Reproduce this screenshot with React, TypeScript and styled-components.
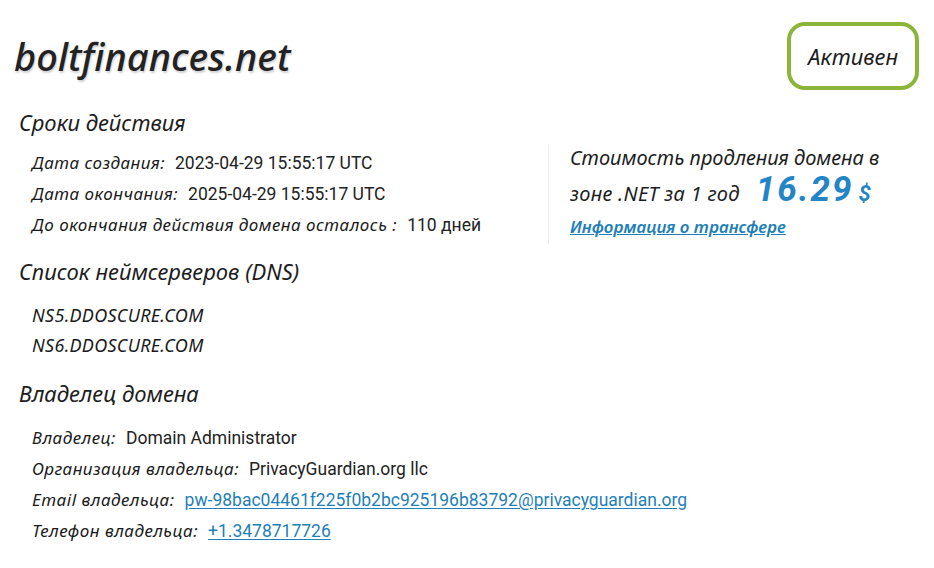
import React from "react";
import styled, { createGlobalStyle } from "styled-components";

const Global = createGlobalStyle`
  html, body { margin: 0; padding: 0; background: #ffffff; }
  body { font-family: "Noto Sans", "Open Sans", sans-serif; color: #1d1d1d; }
`;

const Page = styled.div`
  width: 934px;
  height: 568px;
  box-sizing: border-box;
  padding: 22px 15px 0 14px;
  overflow: hidden;
`;

const Header = styled.header`
  display: flex;
  justify-content: space-between;
  align-items: center;
`;

const Title = styled.h1`
  margin: 0;
  font-family: "Noto Sans", sans-serif;
  font-style: italic;
  font-weight: 500;
  font-size: 38px;
  line-height: 44px;
  color: #232323;
  text-shadow: 1px 2px 2px rgba(0, 0, 0, 0.18);
`;

const Badge = styled.div`
  width: 124px;
  height: 60px;
  box-sizing: content-box;
  border: 4px solid #8ab53a;
  border-radius: 18px;
  display: flex;
  align-items: center;
  justify-content: center;
  font-style: italic;
  font-size: 22px;
  color: #1d1d1d;
`;

const SectionTitle = styled.h2<{ $top: number }>`
  margin: ${(p) => p.$top}px 0 0 5px;
  font-style: italic;
  font-weight: 400;
  font-size: 22px;
  line-height: 30px;
  color: #1d1d1d;
`;

const Split = styled.div`
  display: flex;
  align-items: flex-start;
`;

const Rows = styled.div<{ $top: number; $width?: number }>`
  width: ${(p) => (p.$width ? `${p.$width}px` : "auto")};
  padding: ${(p) => p.$top}px 0 0 18px;
  box-sizing: border-box;
`;

const Row = styled.div`
  display: flex;
  align-items: baseline;
  height: 31px;
  line-height: 31px;
  white-space: nowrap;
`;

const Label = styled.span`
  font-style: italic;
  font-weight: 400;
  font-size: 17px;
  letter-spacing: 0.5px;
  margin-right: 10px;
  color: #1a1a1a;
`;

const Value = styled.span`
  font-family: "Roboto", sans-serif;
  font-size: 17.5px;
  color: #222;
`;

const LinkValue = styled.a`
  font-family: "Roboto", sans-serif;
  font-size: 17.5px;
  color: #1f7fb8;
  text-decoration: underline;
  text-underline-offset: 2px;
`;

const NameServer = styled.div`
  font-style: italic;
  font-weight: 400;
  font-size: 18px;
  line-height: 30px;
  letter-spacing: 0.3px;
  color: #1a1a1a;
`;

const PricePanel = styled.aside`
  margin-top: 8px;
  border-left: 1px solid #ececec;
  padding: 0 0 3px 21px;
  display: flex;
  flex-direction: column;
`;

const PriceText = styled.div`
  font-style: italic;
  font-size: 20px;
  line-height: 26px;
  color: #1d1d1d;
`;

const PriceLine = styled.div`
  display: flex;
  align-items: baseline;
  gap: 16px;
  font-style: italic;
  font-size: 20px;
  letter-spacing: 0.3px;
  color: #1d1d1d;
  line-height: 38px;
`;

const Amount = styled.span`
  font-family: "Roboto", sans-serif;
  font-weight: 700;
  font-style: italic;
  font-size: 35px;
  letter-spacing: 2px;
  color: #2385c6;
`;

const Currency = styled.span`
  font-family: "Roboto", sans-serif;
  font-weight: 700;
  font-style: italic;
  font-size: 22px;
  color: #2385c6;
  margin-left: 5px;
`;

const TransferLink = styled.a`
  font-style: italic;
  font-weight: 600;
  font-size: 17px;
  color: #1f7fb8;
  text-decoration: underline;
  line-height: 28px;
`;

export default function App() {
  return (
    <Page>
      <Global />
      <Header>
        <Title>boltfinances.net</Title>
        <Badge>Активен</Badge>
      </Header>

      <SectionTitle $top={17}>Сроки действия</SectionTitle>
      <Split>
        <Rows $top={10} $width={534}>
          <Row>
            <Label>Дата создания:</Label>
            <Value>2023-04-29 15:55:17 UTC</Value>
          </Row>
          <Row>
            <Label>Дата окончания:</Label>
            <Value>2025-04-29 15:55:17 UTC</Value>
          </Row>
          <Row>
            <Label>До окончания действия домена осталось :</Label>
            <Value>110 дней</Value>
          </Row>
        </Rows>
        <PricePanel>
          <PriceText>Стоимость продления домена в</PriceText>
          <PriceLine>
            <span>зоне .NET за 1 год</span>
            <span>
              <Amount>16.29</Amount>
              <Currency>$</Currency>
            </span>
          </PriceLine>
          <TransferLink href="#">Информация о трансфере</TransferLink>
        </PricePanel>
      </Split>

      <SectionTitle $top={12}>Список неймсерверов (DNS)</SectionTitle>
      <Rows $top={14}>
        <NameServer>NS5.DDOSCURE.COM</NameServer>
        <NameServer>NS6.DDOSCURE.COM</NameServer>
      </Rows>

      <SectionTitle $top={18}>Владелец домена</SectionTitle>
      <Rows $top={14}>
        <Row>
          <Label>Владелец:</Label>
          <Value>Domain Administrator</Value>
        </Row>
        <Row>
          <Label>Организация владельца:</Label>
          <Value>PrivacyGuardian.org llc</Value>
        </Row>
        <Row>
          <Label>Email владельца:</Label>
          <LinkValue href="#">pw-98bac04461f225f0b2bc925196b83792@privacyguardian.org</LinkValue>
        </Row>
        <Row>
          <Label>Телефон владельца:</Label>
          <LinkValue href="#">+1.3478717726</LinkValue>
        </Row>
      </Rows>
    </Page>
  );
}
